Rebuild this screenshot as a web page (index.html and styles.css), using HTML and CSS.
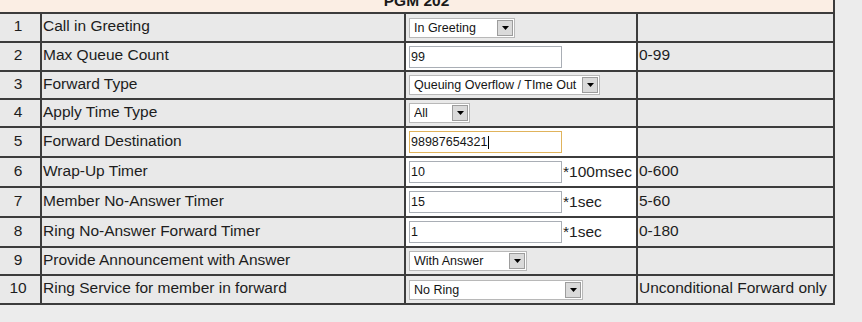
FILE: index.html
```html
<!DOCTYPE html>
<html>
<head>
<meta charset="utf-8">
<title>PGM 202</title>
<link rel="stylesheet" href="styles.css">
</head>
<body>
<table class="cfg">
  <colgroup>
    <col class="c-num">
    <col class="c-lbl">
    <col class="c-ctl">
    <col class="c-note">
  </colgroup>
  <tr class="head"><th colspan="4">PGM 202</th></tr>
  <tr class="h29">
    <td class="num">1</td>
    <td class="lbl">Call in Greeting</td>
    <td class="ctl"><span class="sel w-greet"><span class="sel-text">In Greeting</span><span class="sel-btn"><svg width="7" height="4" viewBox="0 0 7 4"><path d="M0 0H7L3.5 4Z"/></svg></span></span></td>
    <td class="note"></td>
  </tr>
  <tr class="h29">
    <td class="num">2</td>
    <td class="lbl">Max Queue Count</td>
    <td class="ctl white"><input class="txt" type="text" value="99"></td>
    <td class="note">0-99</td>
  </tr>
  <tr class="h28">
    <td class="num">3</td>
    <td class="lbl">Forward Type</td>
    <td class="ctl"><span class="sel w-fwd"><span class="sel-text">Queuing Overflow / TIme Out</span><span class="sel-btn"><svg width="7" height="4" viewBox="0 0 7 4"><path d="M0 0H7L3.5 4Z"/></svg></span></span></td>
    <td class="note"></td>
  </tr>
  <tr class="h28">
    <td class="num">4</td>
    <td class="lbl">Apply Time Type</td>
    <td class="ctl"><span class="sel w-all"><span class="sel-text">All</span><span class="sel-btn"><svg width="7" height="4" viewBox="0 0 7 4"><path d="M0 0H7L3.5 4Z"/></svg></span></span></td>
    <td class="note"></td>
  </tr>
  <tr class="h30">
    <td class="num">5</td>
    <td class="lbl">Forward Destination</td>
    <td class="ctl white"><span class="txt focus">98987654321<span class="caret"></span></span></td>
    <td class="note"></td>
  </tr>
  <tr class="h30">
    <td class="num">6</td>
    <td class="lbl">Wrap-Up Timer</td>
    <td class="ctl white"><span class="field"><input class="txt" type="text" value="10"><span class="unit">*100msec</span></span></td>
    <td class="note">0-600</td>
  </tr>
  <tr class="h30">
    <td class="num">7</td>
    <td class="lbl">Member No-Answer Timer</td>
    <td class="ctl white"><span class="field"><input class="txt" type="text" value="15"><span class="unit">*1sec</span></span></td>
    <td class="note">5-60</td>
  </tr>
  <tr class="h30">
    <td class="num">8</td>
    <td class="lbl">Ring No-Answer Forward Timer</td>
    <td class="ctl white"><span class="field"><input class="txt" type="text" value="1"><span class="unit">*1sec</span></span></td>
    <td class="note">0-180</td>
  </tr>
  <tr class="h28">
    <td class="num">9</td>
    <td class="lbl">Provide Announcement with Answer</td>
    <td class="ctl"><span class="sel w-ans"><span class="sel-text">With Answer</span><span class="sel-btn"><svg width="7" height="4" viewBox="0 0 7 4"><path d="M0 0H7L3.5 4Z"/></svg></span></span></td>
    <td class="note"></td>
  </tr>
  <tr class="h29">
    <td class="num">10</td>
    <td class="lbl">Ring Service for member in forward</td>
    <td class="ctl"><span class="sel w-ring"><span class="sel-text">No Ring</span><span class="sel-btn"><svg width="7" height="4" viewBox="0 0 7 4"><path d="M0 0H7L3.5 4Z"/></svg></span></span></td>
    <td class="note">Unconditional Forward only</td>
  </tr>
</table>
</body>
</html>
```
FILE: styles.css
```css
html, body {
  margin: 0;
  padding: 0;
  background: #ececec;
}

body {
  font-family: "Liberation Sans", Arial, sans-serif;
  color: #1d1d1d;
  overflow: hidden;
}

.cfg {
  border-collapse: separate;
  border-spacing: 0;
  table-layout: fixed;
  width: 837px;
  margin: -12px 0 0 -2px;
  border-top: 2px solid #3c3c3c;
  border-left: 2px solid #3c3c3c;
  font-size: 15.5px;
}

.c-num { width: 42px; }
.c-lbl { width: 364px; }
.c-ctl { width: 232px; }
.c-note { width: 197px; }

.head th {
  height: 24px;
  box-sizing: border-box;
  padding: 0;
  background: #fbeee4;
  border-right: 2px solid #3c3c3c;
  border-bottom: 2px solid #3c3c3c;
  font-weight: bold;
  font-size: 15.5px;
  text-align: center;
  color: #1a1a1a;
}

.h28 { height: 28px; }
.h29 { height: 29px; }
.h30 { height: 30px; }

.cfg td {
  box-sizing: border-box;
  border-right: 2px solid #3c3c3c;
  border-bottom: 2px solid #3c3c3c;
  background: #e9e9e9;
  padding: 0 0 3px 1px;
  vertical-align: middle;
  white-space: nowrap;
  overflow: hidden;
}

.cfg td.num {
  text-align: center;
  padding: 0 4px 3px 0;
}

.cfg td.ctl {
  padding: 0 0 0 3px;
}

.cfg td.white {
  background: #ffffff;
}

.field {
  display: inline-flex;
  align-items: center;
  vertical-align: middle;
}

.txt {
  display: inline-flex;
  align-items: center;
  vertical-align: middle;
  box-sizing: border-box;
  width: 153px;
  height: 22px;
  margin: 0;
  padding: 0 1px;
  border: 1px solid #a9aeb5;
  border-radius: 0;
  background: #ffffff;
  font-family: "Liberation Sans", Arial, sans-serif;
  font-size: 12.5px;
  color: #151515;
  outline: none;
}

.txt.focus {
  border-color: #e0b35c;
}

.caret {
  display: inline-block;
  width: 1px;
  height: 13px;
  margin-left: 1px;
  background: #000000;
}

.unit {
  margin-left: 1px;
  font-size: 15.5px;
}

.sel {
  display: inline-flex;
  align-items: center;
  vertical-align: middle;
  box-sizing: border-box;
  height: 20px;
  padding: 0 1px 0 4px;
  border: 1px solid #b8b8b8;
  background: #ffffff;
  font-size: 12.5px;
  color: #151515;
}

.sel-text {
  flex: 1;
  overflow: hidden;
}

.sel-btn {
  display: flex;
  align-items: center;
  justify-content: center;
  box-sizing: border-box;
  width: 16px;
  height: 16px;
  border: 1px solid #9d9d9d;
  background: #dadada;
}

.sel-btn svg {
  display: block;
  fill: #000000;
}

.w-greet { width: 106px; }
.w-fwd { width: 191px; }
.w-all { width: 61px; }
.w-ans { width: 118px; }
.w-ring { width: 174px; }
```
